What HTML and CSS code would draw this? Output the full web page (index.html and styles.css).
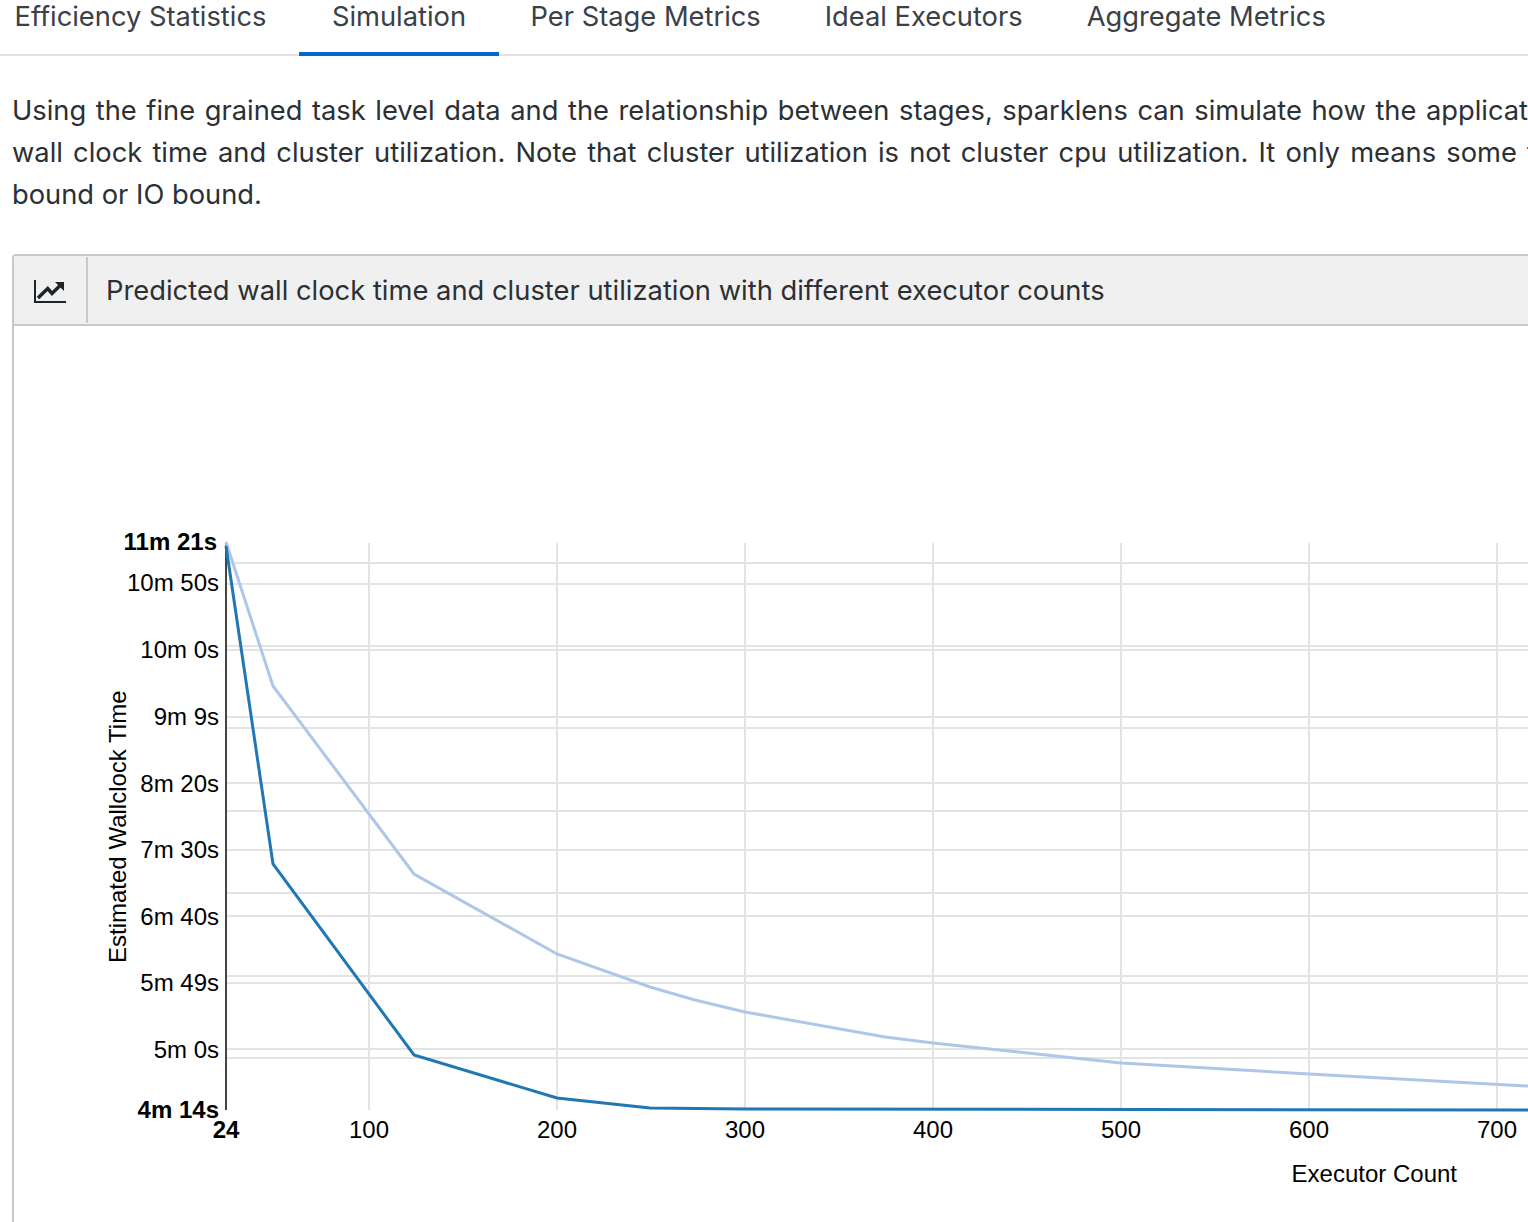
FILE: index.html
```html
<!DOCTYPE html>
<html lang="en">
<head>
<meta charset="utf-8">
<title>Simulation</title>
<link rel="stylesheet" href="styles.css">
</head>
<body>
<div class="page">
  <nav class="tabs">
    <a class="tab">Efficiency Statistics</a>
    <a class="tab active">Simulation</a>
    <a class="tab">Per Stage Metrics</a>
    <a class="tab">Ideal Executors</a>
    <a class="tab">Aggregate Metrics</a>
  </nav>
  <p class="intro">
    <span class="line line-first">Using the fine grained task level data and the relationship between stages, sparklens can simulate how the application</span>
    <span class="line line-second">wall clock time and cluster utilization. Note that cluster utilization is not cluster cpu utilization. It only means some tasks</span>
    <span class="line">bound or IO bound.</span>
  </p>
  <section class="panel">
    <header class="panel-head">
      <span class="panel-icon">
        <svg width="32" height="26" viewBox="0 0 32 26"><path class="ico-axis" d="M1 3V25H32"/><path class="ico-line" d="M4 21L13.700 11.500L18 16.500L27.700 7"/><path class="ico-fill" d="M21 5H30V14Z"/></svg>
      </span>
      <h2 class="panel-title">Predicted wall clock time and cluster utilization with different executor counts</h2>
    </header>
    <div class="panel-body">
      <svg class="chart" width="1528" height="896" viewBox="0 0 1528 896">
        <g class="grid">
          <path d="M226 237H1528M226 258H1528M226 320H1528M226 324H1528M226 391H1528M226 402H1528M226 457H1528M226 485H1528M226 524H1528M226 567H1528M226 590H1528M226 650H1528M226 657H1528M226 723H1528M226 732H1528"/>
          <path d="M369 217V784M557 217V784M745 217V784M933 217V784M1121 217V784M1309 217V784M1497 217V784"/>
        </g>
        <path class="axis" d="M226 217V784"/>
        <polyline class="series-light" points="226,216 273,360 414,548 557,628 650,661 695,674 745,686 885,711 933,717 1121,737 1309,748 1528,760"/>
        <polyline class="series-dark" points="226,220 273,538 414,729 557,772 650,782 745,783 1528,784"/>
        <g class="ylabels">
          <text class="bold" x="217" y="224">11m 21s</text>
          <text x="219" y="265">10m 50s</text>
          <text x="219" y="332">10m 0s</text>
          <text x="219" y="399">9m 9s</text>
          <text x="219" y="466">8m 20s</text>
          <text x="219" y="532">7m 30s</text>
          <text x="219" y="599">6m 40s</text>
          <text x="219" y="665">5m 49s</text>
          <text x="219" y="732">5m 0s</text>
          <text class="bold" x="219" y="792">4m 14s</text>
        </g>
        <g class="xlabels">
          <text class="bold" x="226" y="812">24</text>
          <text x="369" y="812">100</text>
          <text x="557" y="812">200</text>
          <text x="745" y="812">300</text>
          <text x="933" y="812">400</text>
          <text x="1121" y="812">500</text>
          <text x="1309" y="812">600</text>
          <text x="1497" y="812">700</text>
        </g>
        <text class="xtitle" x="1457" y="856">Executor Count</text>
        <text class="ytitle" transform="translate(126 637) rotate(-90)">Estimated Wallclock Time</text>
      </svg>
    </div>
  </section>
</div>
</body>
</html>
```

FILE: styles.css
```css
html, body {
  margin: 0;
  padding: 0;
  height: 1222px;
  overflow: hidden;
  background: #fff;
}
.page {
  width: 1700px;
  font-family: Inter, "Liberation Sans", sans-serif;
  color: #2b3035;
}
.tabs {
  display: flex;
  height: 54px;
  border-bottom: 2px solid #dee2e6;
  padding-left: 14.500px;
}
.tab {
  font-size: 27.300px;
  line-height: 34px;
  padding: 0 32px;
  height: 54px;
  color: #3a4047;
}
.tab:first-child {
  padding-left: 0;
  padding-right: 33px;
}
.tab.active {
  border-bottom: 4px solid #0067ce;
  height: 52px;
  padding: 0 32.500px;
}
.intro {
  margin: 34px 0 38px 12px;
  font-size: 27.300px;
  line-height: 42px;
  white-space: nowrap;
}
.line { display: block; }
.line-first { word-spacing: 1.900px; }
.line-second { word-spacing: 2.500px; }
.panel {
  margin-left: 12px;
  border: 2px solid #c8c8c8;
  border-bottom: 0;
  border-radius: 4px 4px 0 0;
}
.panel-head {
  display: flex;
  align-items: center;
  height: 68px;
  background: #f0f0f0;
  border-bottom: 2px solid #c8c8c8;
}
.panel-icon {
  display: flex;
  align-items: center;
  justify-content: center;
  width: 72px;
  height: 66px;
  border-right: 2px solid #c8c8c8;
}
.panel-title {
  margin: 0 0 0 18px;
  font-size: 27.350px;
  font-weight: 400;
  color: #2b3035;
}
.ico-axis { fill: none; stroke: #1f2429; stroke-width: 2; }
.ico-line { fill: none; stroke: #1f2429; stroke-width: 3.500; }
.ico-fill { fill: #1f2429; }
.panel-body {
  height: 897px;
  background: #fff;
}
.chart {
  display: block;
  margin-left: -14px;
  font-family: "Liberation Sans", Arial, sans-serif;
  font-size: 24px;
  fill: #000;
}
.grid path { fill: none; stroke: #e3e3e3; stroke-width: 2; }
.axis { fill: none; stroke: #444; stroke-width: 2; }
.series-light { fill: none; stroke: #aec7e8; stroke-width: 3; }
.series-dark { fill: none; stroke: #1f77b4; stroke-width: 3; }
.ylabels text { text-anchor: end; }
.xlabels text { text-anchor: middle; }
.bold { font-weight: 700; }
.xtitle { text-anchor: end; }
.ytitle { text-anchor: start; }
```
